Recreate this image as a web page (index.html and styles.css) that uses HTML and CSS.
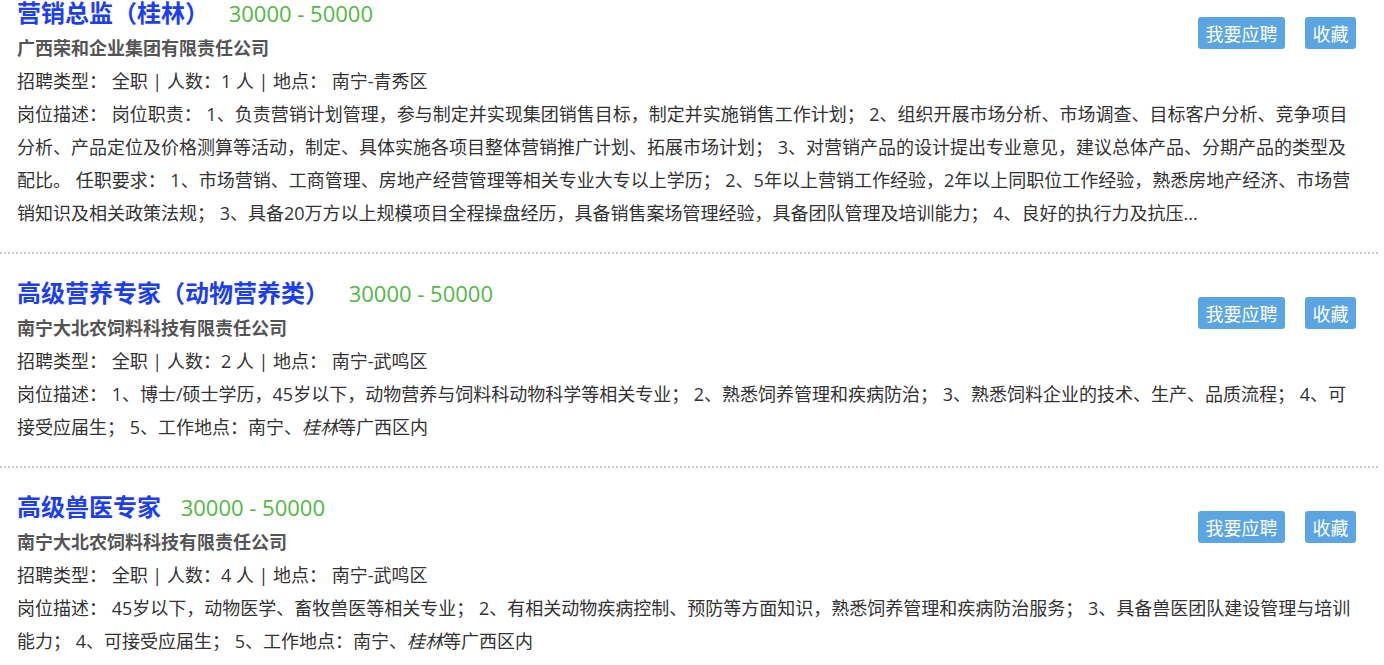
FILE: index.html
```html
<!DOCTYPE html>
<html lang="zh-CN">
<head>
    <meta charset="UTF-8">
    <meta name="viewport" content="width=device-width, initial-scale=1.0">
    <title>职位列表</title>
    <link rel="stylesheet" href="styles.css">
</head>
<body>
    <div class="job-list">
        <!-- 职位 1 -->
        <div class="job">
            <div class="job-actions">
                <button class="btn">我要应聘</button>
                <button class="btn">收藏</button>
            </div>
            <div class="job-title">
                <a href="#">营销总监（桂林）</a>
                <span class="salary">30000 - 50000</span>
            </div>
            <div class="company">广西荣和企业集团有限责任公司</div>
            <div class="meta">招聘类型： 全职 | 人数：1 人 | 地点： 南宁-青秀区</div>
            <div class="desc">岗位描述： 岗位职责： 1、负责营销计划管理，参与制定并实现集团销售目标，制定并实施销售工作计划； 2、组织开展市场分析、市场调查、目标客户分析、竞争项目分析、产品定位及价格测算等活动，制定、具体实施各项目整体营销推广计划、拓展市场计划； 3、对营销产品的设计提出专业意见，建议总体产品、分期产品的类型及配比。 任职要求： 1、市场营销、工商管理、房地产经营管理等相关专业大专以上学历； 2、5年以上营销工作经验，2年以上同职位工作经验，熟悉房地产经济、市场营销知识及相关政策法规； 3、具备20万方以上规模项目全程操盘经历，具备销售案场管理经验，具备团队管理及培训能力； 4、良好的执行力及抗压...</div>
        </div>

        <!-- 职位 2 -->
        <div class="job">
            <div class="job-actions">
                <button class="btn">我要应聘</button>
                <button class="btn">收藏</button>
            </div>
            <div class="job-title">
                <a href="#">高级营养专家（动物营养类）</a>
                <span class="salary">30000 - 50000</span>
            </div>
            <div class="company">南宁大北农饲料科技有限责任公司</div>
            <div class="meta">招聘类型： 全职 | 人数：2 人 | 地点： 南宁-武鸣区</div>
            <div class="desc">岗位描述： 1、博士/硕士学历，45岁以下，动物营养与饲料科动物科学等相关专业； 2、熟悉饲养管理和疾病防治； 3、熟悉饲料企业的技术、生产、品质流程； 4、可接受应届生； 5、工作地点：南宁、<i>桂林</i>等广西区内</div>
        </div>

        <!-- 职位 3 -->
        <div class="job">
            <div class="job-actions">
                <button class="btn">我要应聘</button>
                <button class="btn">收藏</button>
            </div>
            <div class="job-title">
                <a href="#">高级兽医专家</a>
                <span class="salary">30000 - 50000</span>
            </div>
            <div class="company">南宁大北农饲料科技有限责任公司</div>
            <div class="meta">招聘类型： 全职 | 人数：4 人 | 地点： 南宁-武鸣区</div>
            <div class="desc">岗位描述： 45岁以下，动物医学、畜牧兽医等相关专业； 2、有相关动物疾病控制、预防等方面知识，熟悉饲养管理和疾病防治服务； 3、具备兽医团队建设管理与培训能力； 4、可接受应届生； 5、工作地点：南宁、<i>桂林</i>等广西区内</div>
        </div>
    </div>
</body>
</html>
```

FILE: styles.css
```css
body {
    margin: 0;
    font-family: "Open Sans", "Noto Sans CJK SC", sans-serif;
    color: #333;
    background-color: #fff;
    overflow: hidden;
}

.job-list {
    width: 1378px;
    margin-top: -26px;
}

.job {
    padding: 22px 22px 22px 17px;
    border-bottom: 2px dotted #ccc;
    font-size: 18px;
    line-height: 33px;
}

.job-actions {
    float: right;
    display: flex;
    gap: 20px;
    margin-top: 21px;
}

.btn {
    height: 32px;
    padding: 0 7.5px;
    font-family: "Noto Sans CJK SC", sans-serif;
    font-size: 18px;
    line-height: 32px;
    color: #fff;
    background-color: #5ca5e3;
    border: none;
    border-radius: 3px;
    cursor: pointer;
}

.job-title {
    line-height: 34px;
}

.job-title a {
    font-size: 24px;
    font-weight: bold;
    color: #1c3ef3;
    text-decoration: none;
}

.salary {
    margin-left: 15px;
    font-size: 22px;
    color: #52b844;
}

.company {
    font-weight: bold;
    color: #555;
}
```
